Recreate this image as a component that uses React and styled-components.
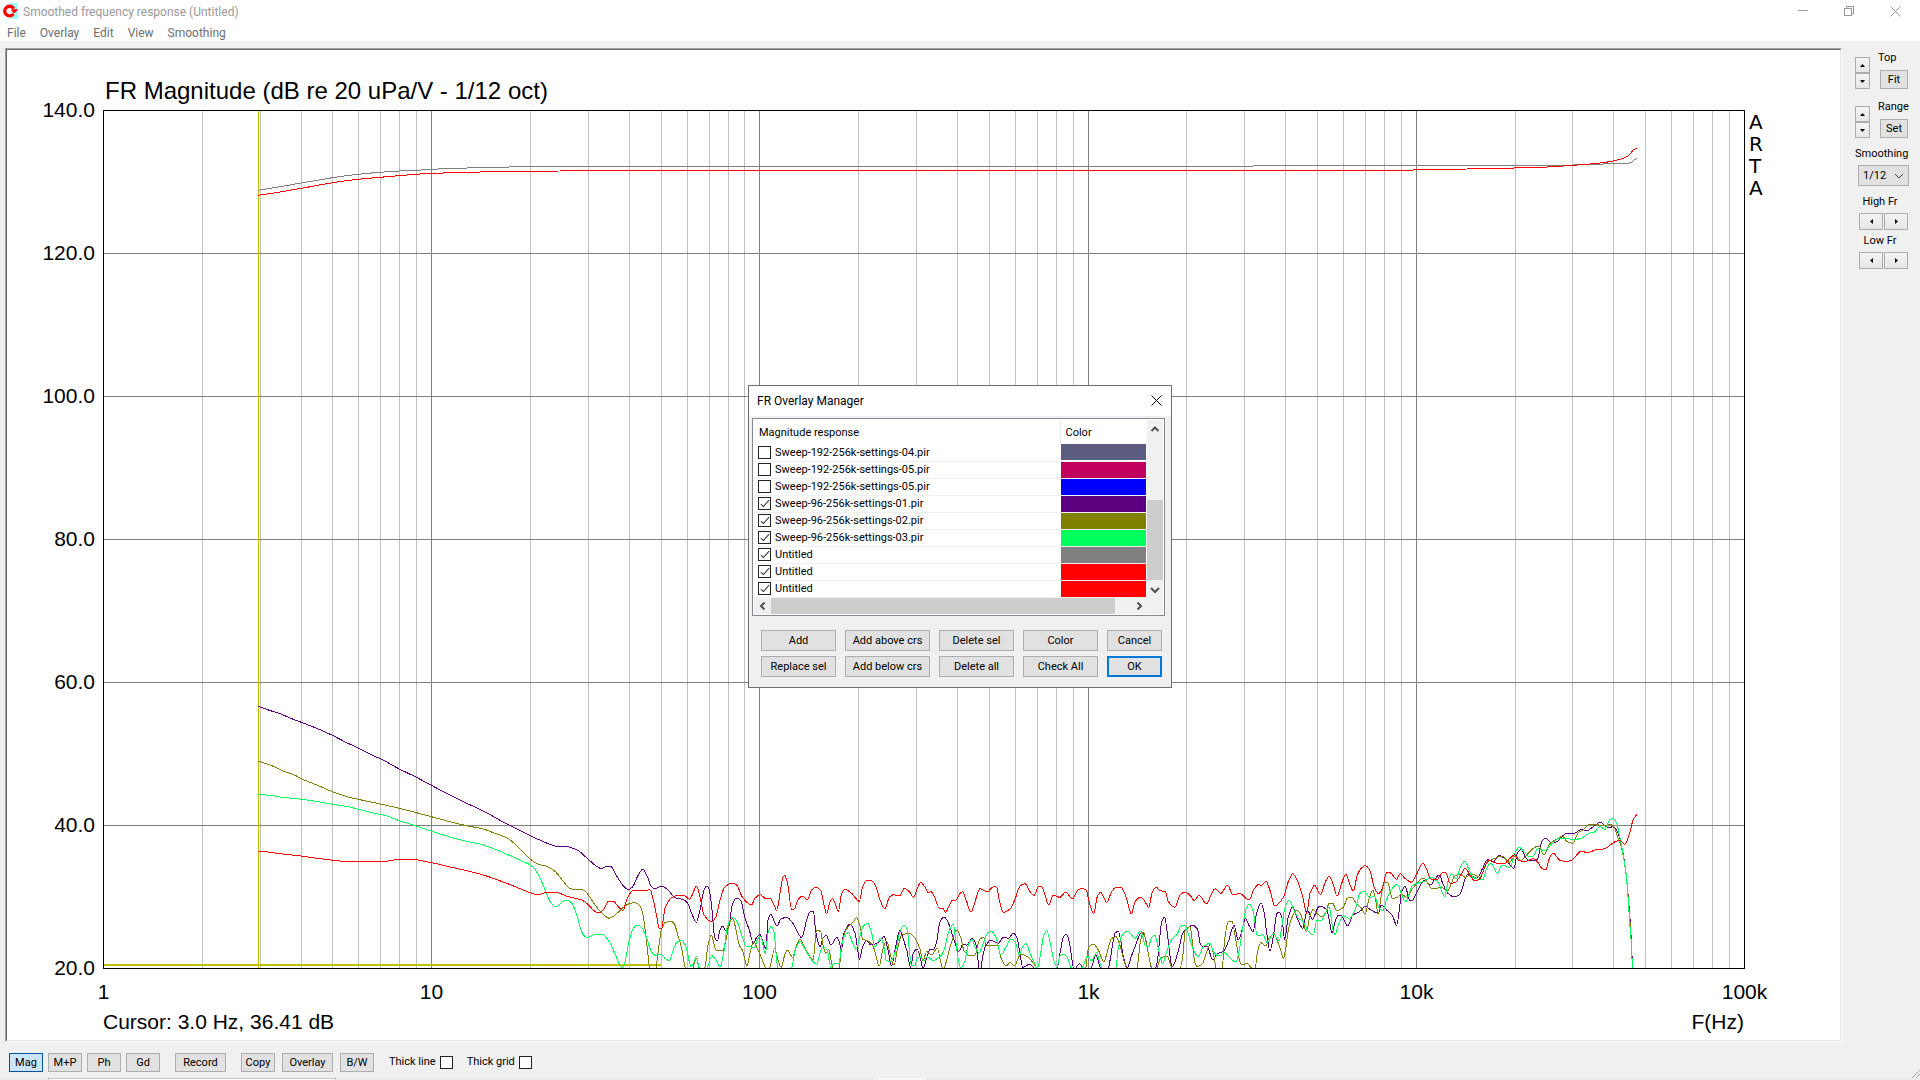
import React, { useState } from "react";
import styled, { createGlobalStyle, css } from "styled-components";

const GlobalStyle = createGlobalStyle`
  *, *::before, *::after { box-sizing: border-box; }
  html, body, #root { height: 100%; }
  body {
    margin: 0;
    overflow: hidden;
    background: #f0f0f0;
    color: #000;
    font-family: Roboto, "DejaVu Sans Condensed", sans-serif;
    font-size: 11px;
    line-height: 14px;
  }
  button, input, select { font: inherit; color: inherit; margin: 0; }
`;

/* ---------- window frame ---------- */

const Window = styled.div`
  display: flex;
  flex-direction: column;
  height: 100vh;
  min-height: 600px;
  background: #f0f0f0;
`;

const TitleBar = styled.header`
  display: flex;
  flex: none;
  align-items: center;
  gap: 4px;
  height: 24px;
  padding: 0 2px 2px 3px;
  background: #fff;
  color: #999;
`;

const WindowTitle = styled.h1`
  flex: 1;
  margin: 0;
  padding-top: 2px;
  font-size: 12px;
  font-weight: 400;
  line-height: 16px;
`;

const CaptionButtons = styled.div`
  display: flex;
`;

const CaptionButton = styled.button`
  display: flex;
  align-items: center;
  justify-content: center;
  width: 46px;
  height: 20px;
  padding: 0;
  border: 0;
  background: none;
`;

const MenuBar = styled.nav`
  display: flex;
  flex: none;
  gap: 14px;
  height: 17px;
  padding: 0 7px;
  background: #fff;
  font-size: 12px;
`;

const MenuItem = styled.button`
  padding: 0;
  border: 0;
  background: none;
  color: #6d6d6d;
  line-height: 16px;
`;

const Body = styled.div`
  display: flex;
  flex: 1;
  min-height: 0;
`;

const ChartPanel = styled.main`
  display: flex;
  flex: 1;
  min-width: 0;
  margin: 7px 0 0 5px;
  border: 1px solid;
  border-color: #a0a0a0 #fff #fff #a0a0a0;
`;

const ChartInner = styled.div`
  display: flex;
  flex: 1;
  min-width: 0;
  border: 1px solid;
  border-color: #696969 #e3e3e3 #e3e3e3 #696969;
  background: #fff;
`;

const ChartSvg = styled.svg`
  display: block;
  flex: 1;
  min-width: 0;
  width: 100%;
  height: 100%;
  font-family: "Liberation Sans", Arial, sans-serif;
  font-size: 21px;
`;

/* ---------- controls ---------- */

const PushButton = styled.button`
  width: ${(p) => p.$width || 34}px;
  height: ${(p) => p.$height || 19}px;
  padding: 1px 0 0;
  border: 1px solid #adadad;
  background: #e1e1e1;
  line-height: 14px;
  white-space: nowrap;
  ${(p) => p.$pressed && css`border-color: #00539c; background: #cce4f7;`}
  ${(p) => p.$primary && css`border: 2px solid #0078d7;`}
`;

const CheckBox = styled.input.attrs({ type: "checkbox" })`
  appearance: none;
  flex: none;
  display: grid;
  place-items: center;
  width: 13px;
  height: 13px;
  border: 1px solid #222;
  background: #fff;
  &:checked::before {
    content: "";
    width: 4px;
    height: 9px;
    margin-bottom: 3px;
    border: solid #333;
    border-width: 0 1px 1px 0;
    transform: rotate(42deg);
  }
`;

const Sidebar = styled.aside`
  display: flex;
  flex-direction: column;
  width: 78px;
  padding: 10px 11px 0 13px;
`;

const SpinGroup = styled.section`
  display: flex;
  align-items: flex-end;
  gap: 8px;
  margin-bottom: 11px;
  & + & { margin-bottom: 9px; }
`;

const Spinner = styled.div`
  display: flex;
  flex-direction: ${(p) => (p.$horizontal ? "row" : "column")};
  gap: ${(p) => (p.$horizontal ? 1 : 0)}px;
  ${(p) => p.$horizontal && css`margin-left: 4px;`}
`;

const SpinButton = styled.button`
  display: flex;
  align-items: center;
  justify-content: center;
  width: ${(p) => (p.$wide ? 24 : 15)}px;
  height: ${(p) => (p.$wide ? 17 : 16)}px;
  padding: 0;
  border: 1px solid #acacac;
  background: linear-gradient(#f4f4f4, #e6e6e6);
`;

const SpinSide = styled.div`
  display: flex;
  flex-direction: column;
  gap: 5px;
  ${PushButton} { margin-left: 2px; }
`;

const Field = styled.div`
  display: flex;
  flex-direction: column;
  gap: 4px;
  margin-bottom: ${(p) => p.$after}px;
`;

const FieldLabel = styled.label`
  white-space: nowrap;
  ${(p) => p.$centered && css`width: 50px; text-align: center;`}
`;

const SelectBox = styled.div`
  display: grid;
  align-items: center;
  width: 51px;
  margin-left: 3px;
  > * { grid-area: 1 / 1; }
  svg { justify-self: end; margin-right: 5px; pointer-events: none; }
`;

const Select = styled.select`
  appearance: none;
  width: 100%;
  height: 21px;
  padding: 0 4px;
  border: 1px solid #adadad;
  border-radius: 0;
  background: #e1e1e1;
`;

const Toolbar = styled.footer`
  display: flex;
  flex: none;
  align-items: center;
  height: 36px;
  padding: 5px 9px 0 9px;
`;

const ToolGroup = styled.div`
  display: flex;
  gap: ${(p) => p.$gap}px;
  margin-right: 15px;
`;

const ToolCheck = styled.label`
  display: flex;
  align-items: center;
  gap: 4px;
  margin-right: 14px;
  padding-bottom: 1px;
`;

const GripArea = styled.div`
  align-self: flex-end;
  margin: 0 -9px -2px auto;
  svg { display: block; }
`;

const TaskEdge = styled.div`
  display: flex;
  flex: none;
  height: 2px;
  background: #ececec;
`;

const TaskSearch = styled.div`
  width: 288px;
  margin-left: 48px;
  border: 1px solid #c4c4c4;
  border-bottom: 0;
  background: #fff;
`;

const TaskActive = styled.div`
  width: 48px;
  margin-left: 542px;
  background: #f7f7f7;
`;

/* ---------- overlay dialog ---------- */

const DialogLayer = styled.div`
  position: fixed;
  inset: 0;
  display: flex;
  align-items: center;
  justify-content: center;
  padding-bottom: 7px;
`;

const Dialog = styled.section`
  width: 424px;
  border: 1px solid #6e6e70;
  background: #f0f0f0;
`;

const DialogTitle = styled.div`
  display: flex;
  align-items: center;
  justify-content: space-between;
  height: 30px;
  padding: 0 9px 0 8px;
  background: #fff;
  h2 { margin: 0; font-size: 12px; font-weight: 400; }
`;

const CloseButton = styled.button`
  display: flex;
  padding: 0 0 2px;
  border: 0;
  background: none;
`;

const ListBox = styled.div`
  display: grid;
  grid-template-columns: 1fr 16px;
  grid-template-rows: 178px 16px;
  width: 413px;
  margin: 2px 0 14px 3px;
  padding: 1px;
  border: 1px solid #828790;
  background: #fff;
`;

const Curves = styled.table`
  width: 100%;
  border-collapse: collapse;
  table-layout: fixed;
  align-self: start;
  th {
    height: 24px;
    padding: 1px 5px 0;
    font-weight: 400;
    text-align: left;
  }
  th:first-child { border-right: 1px solid #e5e5e5; }
  td { height: 17px; padding: 0; border-bottom: 1px solid #f0f0f0; }
`;

const ColorHead = styled.th`
  width: 87px;
`;

const CurveLabel = styled.label`
  display: flex;
  align-items: center;
  gap: 4px;
  height: 16px;
  padding-left: 4px;
  line-height: 16px;
  span { padding-top: 1px; }
`;

const Swatch = styled.div`
  height: 16px;
  margin: 0 1px;
  background: ${(p) => p.$color};
`;

const ScrollBar = styled.div`
  display: flex;
  flex-direction: ${(p) => (p.$vertical ? "column" : "row")};
  background: #f0f0f0;
`;

const ScrollArrow = styled.button`
  display: flex;
  align-items: center;
  justify-content: center;
  flex: none;
  width: 17px;
  height: 16px;
  padding: 0;
  border: 0;
  background: none;
  ${(p) => p.$vertical && css`width: 16px; height: 17px;`}
`;

const Track = styled.div`
  display: flex;
  flex-direction: inherit;
  flex: 1;
  &::before { content: ""; flex: ${(p) => p.$before}; }
  &::after { content: ""; flex: ${(p) => p.$after}; }
`;

const Thumb = styled.div`
  flex: ${(p) => p.$size};
  background: #cdcdcd;
`;

const Corner = styled.div`
  background: #f0f0f0;
`;

const Actions = styled.div`
  display: grid;
  grid-template-columns: 75px 85px 75px 75px 55px;
  gap: 5px 9px;
  padding: 0 9px 10px 12px;
`;

/* ---------- small drawings ---------- */

const AppIcon = () => (
  <svg width="16" height="16" viewBox="0 0 16 16" aria-hidden="true">
    <rect x="7" width="8" height="16" fill="#9ff" />
    <circle cx="6.6" cy="8" r="3.2" fill="#fff" />
    <path d="M10.8 5.8A4.8 4.8 0 1 0 10.4 11" fill="none" stroke="#f00" strokeWidth="3.3" />
    <path d="M7.8 6.4L14.2 6 14 8 10.8 10.6z" fill="#f00" />
  </svg>
);

const triangles = {
  up: "M0 3h5L2.5 0z",
  down: "M0 0h5L2.5 3z",
  left: "M3 0v5L0 2.5z",
  right: "M0 0v5L3 2.5z",
};

const Triangle = ({ dir }) => {
  const tall = dir === "left" || dir === "right";
  return (
    <svg width={tall ? 3 : 5} height={tall ? 5 : 3} aria-hidden="true">
      <path d={triangles[dir]} />
    </svg>
  );
};

const chevrons = {
  up: "M1.5 6L5 2.5 8.500 6",
  down: "M1 2l4 4 4-4",
  left: "M6.500 .5L3 4l3.500 3.500",
  right: "M3.500 .5L7 4 3.500 7.500",
};

const Chevron = ({ dir, width = 2, color = "#505050" }) => (
  <svg width="10" height="8" viewBox="0 0 10 8" fill="none" stroke={color} strokeWidth={width} aria-hidden="true">
    <path d={chevrons[dir]} />
  </svg>
);

const Cross = ({ size, color }) => (
  <svg width={size} height={size} viewBox="0 0 11 11" stroke={color} fill="none" aria-hidden="true">
    <path d="M.5.5l10 10M10.5.5l-10 10" />
  </svg>
);

/* ---------- chart data ---------- */

// Each trace is a list of blocks: the block's origin, then x/y pairs in thirds of a unit.
const A = [240, 690];
const B = [640, 850];
const C = [900, 850];
const D = [1160, 850];
const E = [1400, 800];

const purple = [
  [A, "55,49 88,61 120,71 155,86 184,97 230,115 277,136 320,158 355,174 400,197 425,208 478,237 529,262 574,286 620,310 670,335 730,363 780,391 807,405 871,437 925,461 950,469 980,470 1010,479 1045,508 1070,529 1085,536 1100,529 1112,529 1125,550 1150,587 1165,599 1178,590 1195,555 1208,538"],
  [B, "20,75 35,111 45,116 64,108 85,121 105,143 130,149 142,158 155,190 169,217 180,180 192,120 200,108 208,120 216,180 224,262 232,273 240,240 248,228 258,242 266,230 278,160 290,144 303,152 315,205 328,240 340,280 350,262 360,253 370,280 377,295 385,205 393,193 402,212 411,228 422,208 440,202 460,222 485,263 500,210 510,185 520,184 528,250 540,290 550,262 559,257 573,285 590,262 598,275 604,305 610,255 630,222 645,250 652,290 658,328 668,290 680,272 692,285 710,280 722,272 732,259 744,300 755,348 765,300 780,240 788,262 800,300 812,352 820,310 831,297 840,320"],
  [C, "69,356 80,325 90,298 100,300 110,275 120,215 132,201 142,212 152,238 165,280 176,304 190,282 200,286 217,265 228,285 234,330 240,368 248,320 256,290 272,271 295,280 310,262 325,265 340,249 350,262 360,310 368,352 378,348 388,342 400,352 410,372 440,400 470,360 480,310 490,262 499,252 508,275 516,330 522,360 530,350 538,341 548,352 560,375 575,350 588,315 600,352 610,375 625,355 632,320 645,250 655,243 662,270 670,320 682,355 692,325 705,290 725,247 735,262 745,310 757,360 768,352 775,310 785,215 794,201"],
  [D, "20,235 28,300 36,350 45,335 58,290 68,250 80,237 98,226 112,236 122,285 132,290 142,290 155,325 160,330 170,312 190,304 205,275 222,226 235,270 245,245 256,206 268,228 279,245 290,190 303,159 313,190 320,250 330,303 340,260 350,192 357,186 365,200 374,268 384,205 398,170 412,205 428,235 442,181 458,208 470,180 478,168 500,179 508,210 516,250 525,215 535,196 545,198 563,228 578,196 600,184 616,169 630,178 655,190 664,165 680,180 697,196 710,226 718,180 724,130 735,109 750,152"],
  [E, "37,302 48,282 74,241 92,255 104,238 118,225 128,250 142,278 162,291 180,283 195,238 205,222 230,235 248,205 262,179 280,185 298,166 320,182 342,205 352,160 364,148 378,175 392,183 412,178 426,122 437,115 455,130 475,122 498,101 520,101 545,88 560,93 580,80 600,67 625,83 640,80 652,95 660,118 668,155 676,205 682,260 688,330 694,420 698,520"],
];

const olive = [
  [A, "55,213 105,231 130,243 165,256 184,266 240,289 277,305 325,321 355,328 425,343 478,355 529,368 574,380 630,395 680,407 730,417 760,428 805,446 840,477 871,507 895,523 920,529 945,544 970,574 990,596 1010,599 1030,600 1045,615 1065,645 1090,673 1108,685 1125,675 1150,652 1168,641 1185,638 1200,648 1208,670 1218,740 1228,830 1238,900 1250,820 1258,760"],
  [B, "64,240 75,218 92,213 102,220 115,260 125,295 135,350 150,380 160,350 169,325 178,355 188,372 197,340 204,285 214,256 228,300 248,303 258,270 268,220 278,205 288,240 298,285 308,302 321,347 330,310 341,276 352,295 365,325 376,352 385,365 394,335 404,295 414,330 424,352 434,315 442,300 458,322 468,290 480,268 495,295 510,320 520,330 524,290 530,240 542,245 550,290 558,310 566,298 575,340 585,380 598,350 606,280 618,240 640,215 650,203 660,228 668,268 685,273 700,290 718,348 728,300 740,273 750,310 762,345 772,300 785,255 808,250 825,265 840,298"],
  [C, "69,332 80,305 95,315 112,294 122,335 130,360 140,330 152,285 170,240 182,262 192,302 208,316 225,316 232,290 240,268 250,262 260,288 280,287 292,285 302,320 318,348 330,338 343,348 362,313 385,322 400,340 412,358 440,400 540,400 558,350 565,295 580,282 595,300 612,335 622,305 634,266 648,260 658,280 670,325 682,360 700,385 712,350 722,270 730,246 738,275 748,325 758,362 770,355"],
  [D, "0,328 12,320 22,318 30,340 40,360 60,355 68,320 76,240 90,230 97,275 105,340 112,350 128,340 142,300 151,283 160,310 170,360 186,355 195,260 205,215 215,213 226,260 236,320 245,345 262,340 272,352 285,356 292,310 302,278 318,288 325,268 342,251 355,280 362,300 370,325 378,290 385,240 395,205 410,180 422,192 440,246 448,205 460,178 470,190 485,200 498,185 508,159 518,160 530,182 550,172 562,145 575,142 590,162 605,175 616,192 626,150 638,120 645,140 655,190 663,140 672,97 683,98 697,145 712,142 725,133"],
  [E, "20,292 36,268 70,234 98,267 125,262 142,273 165,228 180,223 196,232 218,222 240,232 262,186 285,175 306,168 328,187 345,168 362,181 385,160 410,140 418,140 432,165 450,130 470,118 488,109 500,124 518,130 535,98 552,88 565,74 590,74 615,78 630,72 645,88 655,118 664,140 672,180 680,240 686,310 692,395 698,520"],
];

const green = [
  [A, "55,313 100,317 120,321 184,328 240,336 277,343 325,350 355,358 400,369 440,378 478,392 529,408 574,423 620,438 670,452 720,462 780,484 830,506 871,525 885,538 905,575 920,612 935,642 950,651 965,637 980,630 995,639 1010,674 1020,710 1030,735 1042,743 1060,735 1088,733 1110,760 1130,803 1140,828 1147,834 1155,815 1168,750 1180,715 1193,705 1207,715 1220,745 1235,787 1245,796"],
  [B, "64,314 75,325 88,332 98,305 110,278 125,270 138,290 148,335 153,350 162,335 170,320 177,355 190,375 203,352 215,317 228,330 240,350 250,315 262,230 278,202 292,216 305,255 318,288 345,292 352,268 362,258 370,290 376,312 384,250 394,228 402,245 408,310 414,360 435,390 456,350 466,300 480,275 495,298 512,326 530,343 540,310 549,291 562,302 572,352 582,340 597,342 604,290 615,255 625,248 638,280 648,298 658,265 670,228 683,220 695,250 704,290 722,264 732,290 738,330 750,335 760,322 770,290 782,238 793,226 802,240 808,300 814,345 824,348 832,325 840,320"],
  [C, "72,332 82,320 100,332 112,325 125,315 135,290 148,240 160,223 168,280 175,330 182,355 194,335 205,285 216,268 225,290 237,308 250,280 262,250 273,243 288,262 303,315 318,290 332,267 345,275 358,315 368,290 378,280 390,310 402,335 412,356 422,310 430,262 440,242 450,275 460,325 470,352 480,318 490,312 502,322 510,345 522,368 548,350 562,318 575,332 590,308 600,340 615,372 648,352 654,300 665,258 683,243 705,265 722,243 735,285 745,290 755,262 764,255 772,280"],
  [D, "0,320 8,340 20,305 35,268 52,252 62,229 74,226 88,262 100,300 115,320 130,290 150,280 160,305 175,318 195,308 210,325 228,336 238,300 247,240 258,178 268,162 280,185 292,258 308,254 322,278 340,251 358,273 366,225 376,170 388,151 400,175 415,205 430,215 442,240 460,255 470,212 485,210 498,185 508,172 518,235 525,254 535,225 550,198 568,205 585,180 600,130 612,124 628,142 645,140 655,170 668,183 680,148 695,118 712,102 722,125"],
  [E, "17,305 38,255 70,245 95,233 115,248 134,290 145,240 155,221 168,238 180,205 194,184 208,212 218,232 248,240 260,205 272,190 293,220 305,195 330,202 345,160 357,142 372,155 385,168 400,168 412,146 433,153 455,132 475,117 500,114 520,120 545,114 570,99 580,98 600,80 615,88 630,58 640,55 650,70 658,105 668,155 678,220 684,290 690,380 694,430 698,520"],
];

const red = [
  [A, "55,484 85,486 110,490 184,498 240,506 320,514 435,514 455,511 490,508 510,508 574,518 640,533 720,552 800,580 871,608 890,614 925,607 945,607 985,620 1025,630 1045,644 1060,660 1075,669 1090,660 1105,634 1120,634 1135,650 1149,661 1160,630 1178,602 1208,603 1230,599 1240,630 1250,680 1258,715"],
  [B, "64,237 75,175 95,143 115,136 135,138 148,148 158,132 169,108 180,140 192,195 215,215 228,200 240,150 255,110 280,99 292,108 305,138 322,158 334,165 345,145 360,134 378,146 392,147 402,165 410,181 420,130 428,84 434,76 442,95 455,178 462,177 475,148 487,138 503,149 515,120 528,111 542,122 552,165 560,192 570,155 578,146 588,168 595,184 605,130 615,118 635,130 658,154 668,110 680,92 695,92 708,110 720,150 735,176 748,142 760,134 778,138 793,115 808,125 820,142 832,115"],
  [C, "62,97 75,112 85,128 93,125 105,145 118,175 128,175 137,187 148,165 158,150 168,150 178,133 187,125 200,155 213,187 225,155 240,116 262,126 280,110 290,112 298,150 310,187 330,177 345,148 360,108 375,101 388,122 402,137 415,110 425,109 435,135 446,164 460,135 480,142 497,126 517,147 532,122 545,115 558,120 570,165 581,190 592,140 602,127 620,157 635,125 648,112 662,112 675,132 685,165 694,192 705,155 722,141 735,155 746,172 756,130 768,111 780,122 796,125 805,155 825,172 840,135"],
  [D, "75,126 92,138 103,152 117,136 140,162 155,130 165,116 183,130 202,106 220,135 238,130 267,150 282,118 295,104 305,106 318,94 328,115 345,168 370,142 385,95 398,71 412,92 428,140 440,190 450,130 464,106 482,134 495,98 508,78 520,105 531,139 545,100 557,73 570,105 580,123 592,75 605,53 616,47 630,62 642,110 656,131 668,112 680,68 690,68 710,88 720,71 735,85 755,97 770,72 789,40"],
  [E, "80,208 92,237 110,240 128,217 138,219 150,250 165,248 182,225 196,205 210,225 224,242 238,238 255,200 266,180 290,190 312,192 330,175 345,164 355,180 375,185 400,176 412,185 425,205 437,210 450,170 460,160 480,181 500,184 515,180 545,153 562,159 585,150 615,146 640,128 658,121 675,133 690,95 700,58 711,43"],
];

const T = [0, 0];
const grayTop = [
  [T, "775,571 857,557 904,549 969,538 998,533 1074,523 1140,517 1197,513 1248,511 1293,508 1435,503 1590,500 1700,499 3400,499 4150,497 4500,496 4720,495 4800,493 4820,491 4880,490 4895,486 4903,480 4911,475"],
];
const redTop = [
  [T, "775,586 840,576 904,565 998,548 1074,538 1140,532 1197,527 1248,523 1293,520 1383,518 1479,515 1680,513 1900,511 4150,511 4400,507 4620,502 4720,496 4800,489 4840,483 4875,473 4890,463 4900,450 4911,445"],
];

function toPoints(blocks) {
  const out = [];
  blocks.forEach(([[ox, oy], pairs]) => {
    pairs.split(" ").forEach((pair) => {
      const [px, py] = pair.split(",").map(Number);
      const x = ox + px / 3;
      if (!out.length || x > out[out.length - 1][0]) out.push([x, oy + py / 3]);
    });
  });
  return out;
}

// Monotone cubic through the points, so peaks stay rounded without overshoot.
function smoothPath(blocks) {
  const p = toPoints(blocks);
  const n = p.length;
  const slope = (i) => (p[i + 1][1] - p[i][1]) / (p[i + 1][0] - p[i][0]);
  const tangent = p.map((_, i) => {
    if (i === 0) return slope(0);
    if (i === n - 1) return slope(n - 2);
    const a = slope(i - 1);
    const b = slope(i);
    return a * b <= 0 ? 0 : (2 * a * b) / (a + b);
  });
  let d = `M${p[0][0].toFixed(1)} ${p[0][1].toFixed(1)}`;
  for (let i = 0; i < n - 1; i++) {
    const h = (p[i + 1][0] - p[i][0]) / 3;
    d += `C${[
      p[i][0] + h,
      p[i][1] + h * tangent[i],
      p[i + 1][0] - h,
      p[i + 1][1] - h * tangent[i + 1],
      p[i + 1][0],
      p[i + 1][1],
    ].map((v) => v.toFixed(1)).join(" ")}`;
  }
  return d;
}

const traces = [
  { color: "#5c007c", blocks: purple },
  { color: "#808000", blocks: olive },
  { color: "#00ff60", blocks: green },
  { color: "#808080", blocks: grayTop },
  { color: "#ff0000", blocks: redTop },
  { color: "#ff0000", blocks: red },
].map((t) => ({ color: t.color, d: smoothPath(t.blocks) }));

const plot = { left: 103, right: 1744, top: 110, bottom: 968 };
const decade = (plot.right - plot.left) / 5;
const freqX = (f) => Math.round(plot.left + Math.log10(f) * decade) + 0.5;
const levelY = (db) => plot.bottom - ((db - 20) / 20) * 143;

const minorX = [];
for (let k = 0; k < 5; k++) for (let m = 2; m < 10; m++) minorX.push(freqX(m * 10 ** k));
const majorX = [10, 100, 1000, 10000].map(freqX);
const levels = [140, 120, 100, 80, 60, 40, 20];
const freqLabels = [[1, "1"], [10, "10"], [100, "100"], [1000, "1k"], [10000, "10k"], [100000, "100k"]];

function Chart() {
  return (
    <ChartSvg viewBox="7 50 1833 990" role="img" aria-label="Frequency response magnitude">
      <defs>
        <clipPath id="plot-area">
          <rect x={plot.left} y={plot.top} width={plot.right - plot.left} height={plot.bottom - plot.top} />
        </clipPath>
      </defs>
      <g fill="none" shapeRendering="crispEdges">
        <path stroke="#c0c0c0" d={minorX.map((x) => `M${x} ${plot.top}V${plot.bottom}`).join("")} />
        <path stroke="#808080" d={majorX.map((x) => `M${x} ${plot.top}V${plot.bottom}`).join("")} />
        <path
          stroke="#808080"
          d={levels.slice(1, -1).map((db) => `M${plot.left} ${levelY(db) + 0.5}H${plot.right}`).join("")}
        />
        <path stroke="#c0c000" d={`M258.5 ${plot.top}V${plot.bottom}`} />
        <path stroke="#c0c000" strokeWidth="2" d={`M${plot.left} 965H661`} />
        <g clipPath="url(#plot-area)">
          {traces.map((t, i) => (
            <path key={i} stroke={t.color} d={t.d} />
          ))}
        </g>
        <rect
          x={plot.left + 0.5}
          y={plot.top + 0.5}
          width={plot.right - plot.left}
          height={plot.bottom - plot.top}
          stroke="#000"
        />
      </g>
      <text x="105" y="99" fontSize="24">FR Magnitude (dB re 20 uPa/V - 1/12 oct)</text>
      {levels.map((db) => (
        <text key={db} x="95" y={levelY(db) + 7} textAnchor="end">{db.toFixed(1)}</text>
      ))}
      {freqLabels.map(([f, label]) => (
        <text key={f} x={freqX(f)} y="999" textAnchor="middle">{label}</text>
      ))}
      <text x="103" y="1029">Cursor: 3.0 Hz, 36.41 dB</text>
      <text x="1744" y="1029" textAnchor="end">F(Hz)</text>
      <g fontFamily="'DejaVu Sans', sans-serif" fontSize="20">
        {["A", "R", "T", "A"].map((c, i) => (
          <text key={i} x="1749" y={129 + i * 22}>{c}</text>
        ))}
      </g>
    </ChartSvg>
  );
}

const overlays = [
  { name: "Sweep-192-256k-settings-04.pir", color: "#5c5c80", on: false },
  { name: "Sweep-192-256k-settings-05.pir", color: "#c0005c", on: false },
  { name: "Sweep-192-256k-settings-05.pir", color: "#0000ff", on: false },
  { name: "Sweep-96-256k-settings-01.pir", color: "#5c0080", on: true },
  { name: "Sweep-96-256k-settings-02.pir", color: "#808000", on: true },
  { name: "Sweep-96-256k-settings-03.pir", color: "#00ff5c", on: true },
  { name: "Untitled", color: "#808080", on: true },
  { name: "Untitled", color: "#ff0000", on: true },
  { name: "Untitled", color: "#ff0000", on: true },
];

function OverlayManager() {
  const [rows, setRows] = useState(overlays);
  const toggle = (index) =>
    setRows(rows.map((r, i) => (i === index ? { ...r, on: !r.on } : r)));
  return (
    <DialogLayer>
      <Dialog role="dialog" aria-labelledby="overlay-title">
        <DialogTitle>
          <h2 id="overlay-title">FR Overlay Manager</h2>
          <CloseButton aria-label="Close dialog"><Cross size={11} color="#000" /></CloseButton>
        </DialogTitle>
        <ListBox>
          <Curves>
            <thead>
              <tr>
                <th>Magnitude response</th>
                <ColorHead>Color</ColorHead>
              </tr>
            </thead>
            <tbody>
              {rows.map((row, i) => (
                <tr key={i}>
                  <td>
                    <CurveLabel>
                      <CheckBox checked={row.on} onChange={() => toggle(i)} />
                      <span>{row.name}</span>
                    </CurveLabel>
                  </td>
                  <td><Swatch $color={row.color} /></td>
                </tr>
              ))}
            </tbody>
          </Curves>
          <ScrollBar $vertical>
            <ScrollArrow $vertical aria-label="Scroll up"><Chevron dir="up" /></ScrollArrow>
            <Track $before={63} $after={1}><Thumb $size={80} /></Track>
            <ScrollArrow $vertical aria-label="Scroll down"><Chevron dir="down" /></ScrollArrow>
          </ScrollBar>
          <ScrollBar>
            <ScrollArrow aria-label="Scroll left"><Chevron dir="left" /></ScrollArrow>
            <Track $before={0} $after={15}><Thumb $size={344} /></Track>
            <ScrollArrow aria-label="Scroll right"><Chevron dir="right" /></ScrollArrow>
          </ScrollBar>
          <Corner />
        </ListBox>
        <Actions>
          <PushButton $width={75} $height={21}>Add</PushButton>
          <PushButton $width={85} $height={21}>Add above crs</PushButton>
          <PushButton $width={75} $height={21}>Delete sel</PushButton>
          <PushButton $width={75} $height={21}>Color</PushButton>
          <PushButton $width={55} $height={21}>Cancel</PushButton>
          <PushButton $width={75} $height={21}>Replace sel</PushButton>
          <PushButton $width={85} $height={21}>Add below crs</PushButton>
          <PushButton $width={75} $height={21}>Delete all</PushButton>
          <PushButton $width={75} $height={21}>Check All</PushButton>
          <PushButton $width={55} $height={21} $primary>OK</PushButton>
        </Actions>
      </Dialog>
    </DialogLayer>
  );
}

function VerticalSpin({ label, action }) {
  return (
    <SpinGroup>
      <Spinner>
        <SpinButton aria-label={`${label} up`}><Triangle dir="up" /></SpinButton>
        <SpinButton aria-label={`${label} down`}><Triangle dir="down" /></SpinButton>
      </Spinner>
      <SpinSide>
        <span>{label}</span>
        <PushButton $width={28}>{action}</PushButton>
      </SpinSide>
    </SpinGroup>
  );
}

function HorizontalSpin({ label }) {
  return (
    <Field $after={4}>
      <FieldLabel as="span" $centered>{label}</FieldLabel>
      <Spinner $horizontal>
        <SpinButton $wide aria-label={`${label} down`}><Triangle dir="left" /></SpinButton>
        <SpinButton $wide aria-label={`${label} up`}><Triangle dir="right" /></SpinButton>
      </Spinner>
    </Field>
  );
}

export default function App() {
  return (
    <Window>
      <GlobalStyle />
      <TitleBar>
        <AppIcon />
        <WindowTitle>Smoothed frequency response (Untitled)</WindowTitle>
        <CaptionButtons>
          <CaptionButton aria-label="Minimize">
            <svg width="10" height="10" shapeRendering="crispEdges"><path d="M0 4.5h10" stroke="#999" /></svg>
          </CaptionButton>
          <CaptionButton aria-label="Restore">
            <svg width="10" height="10" fill="none" stroke="#999" shapeRendering="crispEdges">
              <path d="M.5 2.5h7v7h-7zM2.5 2V.5h7v7H8" />
            </svg>
          </CaptionButton>
          <CaptionButton aria-label="Close"><Cross size={11} color="#999" /></CaptionButton>
        </CaptionButtons>
      </TitleBar>
      <MenuBar>
        {["File", "Overlay", "Edit", "View", "Smoothing"].map((m) => (
          <MenuItem key={m}>{m}</MenuItem>
        ))}
      </MenuBar>
      <Body>
        <ChartPanel>
          <ChartInner>
            <Chart />
          </ChartInner>
        </ChartPanel>
        <Sidebar>
          <VerticalSpin label="Top" action="Fit" />
          <VerticalSpin label="Range" action="Set" />
          <Field $after={9}>
            <FieldLabel htmlFor="smoothing">Smoothing</FieldLabel>
            <SelectBox>
              <Select id="smoothing" defaultValue="1/12">
                <option>1/1</option>
                <option>1/3</option>
                <option>1/6</option>
                <option>1/12</option>
                <option>1/24</option>
              </Select>
              <Chevron dir="down" width={1} color="#444" />
            </SelectBox>
          </Field>
          <HorizontalSpin label="High Fr" />
          <HorizontalSpin label="Low Fr" />
        </Sidebar>
      </Body>
      <Toolbar>
        <ToolGroup $gap={5}>
          <PushButton $pressed>Mag</PushButton>
          <PushButton>M+P</PushButton>
          <PushButton>Ph</PushButton>
          <PushButton>Gd</PushButton>
        </ToolGroup>
        <ToolGroup>
          <PushButton $width={51}>Record</PushButton>
        </ToolGroup>
        <ToolGroup $gap={7}>
          <PushButton>Copy</PushButton>
          <PushButton $width={51}>Overlay</PushButton>
          <PushButton>B/W</PushButton>
        </ToolGroup>
        <ToolCheck>Thick line <CheckBox /></ToolCheck>
        <ToolCheck>Thick grid <CheckBox /></ToolCheck>
        <GripArea>
          <svg width="10" height="10" fill="none" stroke="#a0a0a0" aria-hidden="true">
            <path d="M0 10L10 0M4 10l6-6M8 10l2-2" />
          </svg>
        </GripArea>
      </Toolbar>
      <TaskEdge>
        <TaskSearch />
        <TaskActive />
      </TaskEdge>
      <OverlayManager />
    </Window>
  );
}
